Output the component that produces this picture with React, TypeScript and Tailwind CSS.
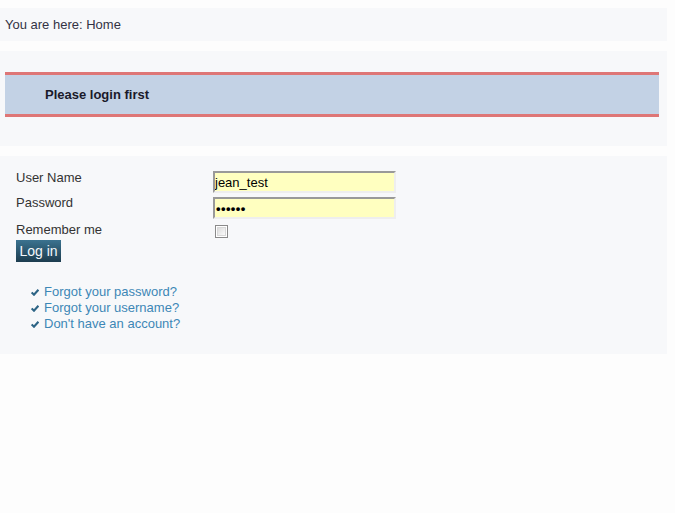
import React from "react";

function Check() {
  return (
    <svg width="8" height="7" viewBox="0 0 8 7" className="shrink-0">
      <path d="M0.7 3.4 L3 5.7 L7.4 0.8" fill="none" stroke="#2c6485" strokeWidth="2.1" />
    </svg>
  );
}

const links = ["Forgot your password?", "Forgot your username?", "Don't have an account?"];

export default function App() {
  return (
    <div
      className="min-h-[513px] w-[675px] bg-[#fdfdfd] pt-[8px] text-[13px] text-[#333]"
      style={{ fontFamily: '"Liberation Sans", Arial, sans-serif' }}
    >
      {/* breadcrumbs */}
      <div className="flex h-[33px] w-[667px] items-center bg-[#f7f8fa] pl-[5px] leading-[15px] text-[#333344]">
        You are here: Home
      </div>

      {/* system message */}
      <div className="mt-[10px] flex h-[95px] w-[667px] flex-col bg-[#f7f8fa] pt-[21px]">
        <div className="ml-[5px] flex h-[45px] w-[654px] items-center border-y-[3px] border-[#de7676] bg-[#c3d2e5] pl-[40px] font-bold leading-[15px] text-[#1a1a2a]">
          Please login first
        </div>
      </div>

      {/* login form */}
      <div className="mt-[10px] w-[667px] bg-[#f7f8fa] pb-[22px] pl-[16px] pt-[14px]">
        <div className="flex h-[25px] leading-[15px]">
          <div className="w-[197px]">User Name</div>
          <input
            readOnly
            value="jean_test"
            className="mt-[1px] h-[22px] w-[183px] border-2 border-b-[#eeeeee] border-l-[#999999] border-r-[#eeeeee] border-t-[#999999] bg-[#ffffc0] px-0 text-[13px] text-black outline-none"
            style={{ fontFamily: '"Liberation Sans", Arial, sans-serif' }}
          />
        </div>
        <div className="flex h-[27px] leading-[15px]">
          <div className="w-[197px]">Password</div>
          <div className="mt-[2px] flex h-[22px] w-[183px] items-center border-2 border-b-[#eeeeee] border-l-[#999999] border-r-[#eeeeee] border-t-[#999999] bg-[#ffffc0] pl-[1px] text-[13px] font-bold leading-[15px] tracking-[0.4px] text-black">
            ••••••
          </div>
        </div>
        <div className="flex h-[18px] leading-[15px]">
          <div className="w-[197px]">Remember me</div>
          <div className="ml-[2px] mt-[3px] flex h-[13px] w-[13px] items-center justify-center border border-[#8a8a8a] bg-white">
            <div className="h-[9px] w-[9px] border border-[#d8d8d8] bg-gradient-to-br from-[#dcdcdc] to-[#fbfbfb]" />
          </div>
        </div>
        <button className="flex h-[22px] w-[45px] items-center justify-center bg-gradient-to-b from-[#3b7390] to-[#1d3d4f] text-[14px] leading-[16px] text-[#f4f8fb]">
          Log in
        </button>

        <ul className="mt-[22px] flex flex-col pl-[15px]">
          {links.map((t) => (
            <li key={t} className="flex h-[16px] items-center gap-[5px] leading-[16px]">
              <Check />
              <span className="text-[#3d87b6]">{t}</span>
            </li>
          ))}
        </ul>
      </div>
    </div>
  );
}
